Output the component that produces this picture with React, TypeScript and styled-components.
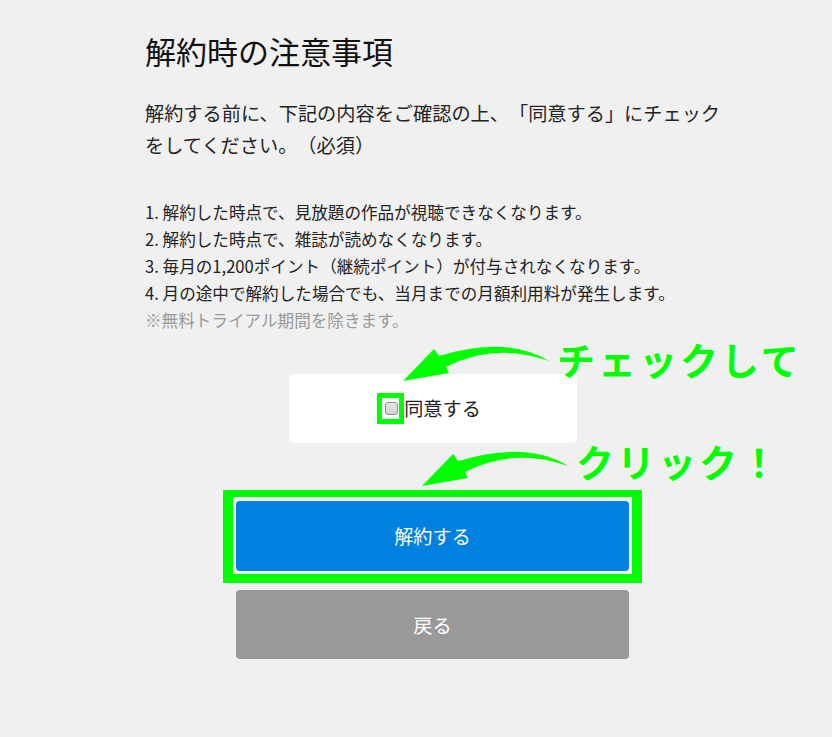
import React from "react";
import styled, { createGlobalStyle } from "styled-components";

const GlobalStyle = createGlobalStyle`
  html, body {
    margin: 0;
    padding: 0;
    background: #f0f0f0;
  }
  body {
    font-family: "Noto Sans CJK JP", "Noto Sans", sans-serif;
    color: #222;
    text-spacing-trim: space-all;
  }
`;

const notes = [
  "1. 解約した時点で、見放題の作品が視聴できなくなります。",
  "2. 解約した時点で、雑誌が読めなくなります。",
  "3. 毎月の1,200ポイント（継続ポイント）が付与されなくなります。",
  "4. 月の途中で解約した場合でも、当月までの月額利用料が発生します。",
];

const Arrow = ({ left, top }: { left: number; top: number }) => (
  <ArrowSvg width="160" height="46" viewBox="0 0 160 46" style={{ left, top }}>
    <path
      d="M7 42 L38 10 L43 17 Q112 -3.5 153 22 Q98.5 3 50 28 L53 34 Z"
      fill="#00ff00"
    />
  </ArrowSvg>
);

const App = () => {
  return (
    <>
      <GlobalStyle />
      <Page>
        <Title>解約時の注意事項</Title>
        <Lead>
          解約する前に、下記の内容をご確認の上、「同意する」にチェックをしてください。（必須）
        </Lead>
        <NoteList>
          {notes.map((n, i) => (
            <li key={i}>{n}</li>
          ))}
          <Remark>※無料トライアル期間を除きます。</Remark>
        </NoteList>

        <AgreeBox>
          <Arrow left={107} top={-35} />
          <Callout style={{ left: 268, top: -34 }}>チェックして</Callout>
          <AgreeLabel>
            <CheckWrap>
              <Check type="checkbox" />
              <CheckMark />
            </CheckWrap>
            同意する
          </AgreeLabel>
        </AgreeBox>

        <Actions>
          <PrimaryWrap>
            <Arrow left={179} top={-57} />
            <Callout style={{ left: 340, top: -59 }}>クリック！</Callout>
            <Highlight />
            <Button $variant="primary">解約する</Button>
          </PrimaryWrap>
          <Button $variant="back">戻る</Button>
        </Actions>
      </Page>
    </>
  );
};

const Page = styled.div`
  width: 580px;
  padding: 30px 0 60px 145px;
`;

const Title = styled.h1`
  margin: 0;
  font-size: 31px;
  font-weight: normal;
  line-height: 42px;
  color: #111;
`;

const Lead = styled.p`
  margin: 25px 0 0;
  width: 578px;
  font-size: 19.2px;
  line-height: 32px;
  color: #222;
`;

const NoteList = styled.ul`
  margin: 38px 0 0;
  padding: 0;
  list-style: none;
  font-size: 16.6px;
  line-height: 27px;
  color: #222;
`;

const Remark = styled.li`
  color: #999;
`;

const AgreeBox = styled.div`
  position: relative;
  width: 288px;
  height: 69px;
  margin: 40px 0 0 144px;
  background: #fff;
  border-radius: 5px;
  display: flex;
  align-items: center;
  justify-content: center;
`;

const AgreeLabel = styled.label`
  display: flex;
  align-items: center;
  font-size: 19.2px;
  line-height: 1;
  color: #222;
`;

const CheckWrap = styled.span`
  position: relative;
  display: inline-flex;
  margin-right: 6px;
`;

const Check = styled.input`
  appearance: none;
  margin: 0;
  width: 13px;
  height: 13px;
  border: 1px solid #8f8f8f;
  border-radius: 3px;
  background: linear-gradient(#e6e6e6, #d4d4d4);
`;

const CheckMark = styled.span`
  position: absolute;
  left: -8px;
  top: -9px;
  right: -6px;
  bottom: -9px;
  border: 5px solid #00ff00;
  pointer-events: none;
`;

const Actions = styled.div`
  margin: 58px 0 0 91px;
  width: 393px;
  display: flex;
  flex-direction: column;
  gap: 19px;
`;

const PrimaryWrap = styled.div`
  position: relative;
`;

const Highlight = styled.div`
  position: absolute;
  left: -13px;
  right: -13px;
  top: -11px;
  bottom: -12px;
  border-style: solid;
  border-color: #00ff00;
  border-width: 7px 10px 9px;
  pointer-events: none;
`;

const Button = styled.button<{ $variant: "primary" | "back" }>`
  display: block;
  width: 100%;
  height: ${(p) => (p.$variant === "primary" ? "70px" : "69px")};
  border: none;
  border-radius: 4px;
  background: ${(p) => (p.$variant === "primary" ? "#0080df" : "#999999")};
  color: #fff;
  font-family: inherit;
  font-size: 19.2px;
  cursor: pointer;
`;

const ArrowSvg = styled.svg`
  position: absolute;
  overflow: visible;
  pointer-events: none;
  z-index: 2;
`;

const Callout = styled.span`
  position: absolute;
  white-space: nowrap;
  font-size: 38px;
  font-weight: 700;
  line-height: 1;
  letter-spacing: 3px;
  color: #00ff00;
  pointer-events: none;
  z-index: 2;
`;

export default App;
